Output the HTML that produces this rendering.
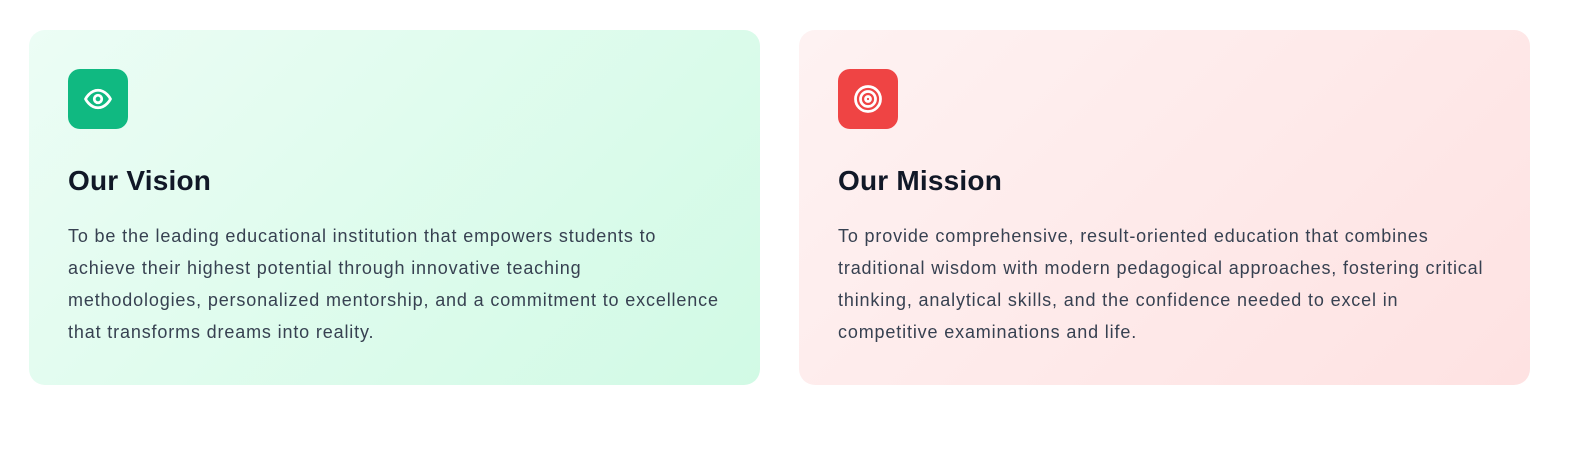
<!DOCTYPE html>
<html><head><style>
body{margin:0;width:1587px;height:451px;background:#fff;font-family:"Liberation Sans",sans-serif;}
.card{position:absolute;top:30px;width:731px;height:355px;border-radius:16px;box-sizing:border-box;padding:39px;}
.v{left:29px;background:linear-gradient(135deg,#ecfdf5,#d1fae5);}
.m{left:799px;background:linear-gradient(135deg,#fef2f2,#fee2e2);}
.ic{width:60px;height:60px;border-radius:12px;display:flex;align-items:center;justify-content:center;}
h3{margin:36px 0 0;font-size:28px;font-weight:bold;color:#111827;line-height:32px;letter-spacing:0.2px;}
p{margin:23px 0 0;font-size:18px;line-height:32px;color:#374151;white-space:nowrap;letter-spacing:0.85px;}
</style></head><body>
<div class="card v">
<div class="ic" style="background:#10b981"><svg width="30" height="30" viewBox="0 0 24 24" fill="none" stroke="#fff" stroke-width="2.2" stroke-linecap="round" stroke-linejoin="round"><path d="M2 12s3.5-7 10-7 10 7 10 7-3.5 7-10 7-10-7-10-7z"/><circle cx="12" cy="12" r="3"/></svg></div>
<h3>Our Vision</h3>
<p>To be the leading educational institution that empowers students to<br>achieve their highest potential through innovative teaching<br>methodologies, personalized mentorship, and a commitment to excellence<br>that transforms dreams into reality.</p>
</div>
<div class="card m">
<div class="ic" style="background:#ef4444"><svg width="30" height="30" viewBox="0 0 24 24" fill="none" stroke="#fff" stroke-width="2.2"><circle cx="12" cy="12" r="10"/><circle cx="12" cy="12" r="6"/><circle cx="12" cy="12" r="2"/></svg></div>
<h3>Our Mission</h3>
<p>To provide comprehensive, result-oriented education that combines<br>traditional wisdom with modern pedagogical approaches, fostering critical<br>thinking, analytical skills, and the confidence needed to excel in<br>competitive examinations and life.</p>
</div>
</body></html>
